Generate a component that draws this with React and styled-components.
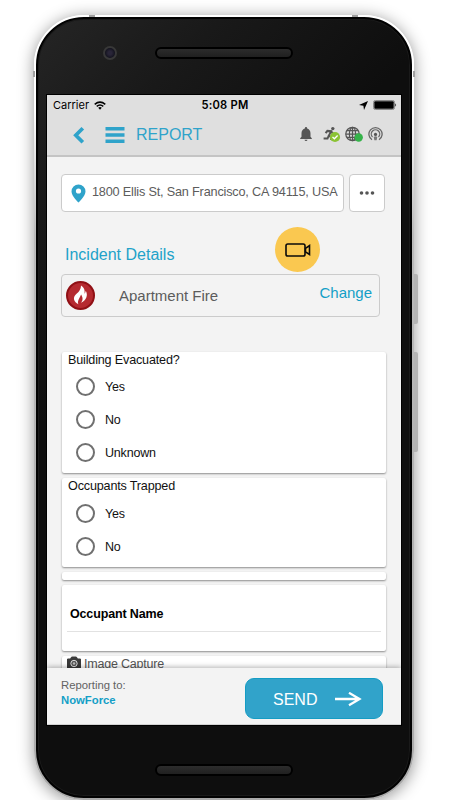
import React from "react";
import styled, { createGlobalStyle } from "styled-components";

const Global = createGlobalStyle`
  *, *::before, *::after { box-sizing: border-box; }
  html, body { margin: 0; background: #fff; overflow: hidden; }
  body { font-family: "Liberation Sans", Arial, sans-serif; }
`;

const Stage = styled.main`
  width: 450px;
  height: 800px;
  overflow: hidden;
  padding: 15px 0 0 34px;
  background: #fff;
`;

const Rim = styled.div`
  position: relative;
  width: 380px;
  height: 785px;
  padding: 2px;
  border-radius: 50px;
  background: linear-gradient(180deg, #fff 0%, #fff 12%, #bbb 28%, #aaa 100%);
  box-shadow: 0 2px 16px rgba(0, 0, 0, 0.42);
`;

const SideKey = styled.span`
  position: absolute;
  left: 380px;
  top: ${(p) => p.$top}px;
  width: 4px;
  height: ${(p) => p.$h}px;
  border-radius: 0 2px 2px 0;
  background: #b4b4b4;
`;

const Antenna = styled.span`
  position: absolute;
  left: ${(p) => p.$x}px;
  top: ${(p) => p.$y}px;
  width: ${(p) => p.$w}px;
  height: ${(p) => p.$h}px;
  background: #a0a0a0;
`;

const Body = styled.div`
  position: relative;
  width: 376px;
  height: 781px;
  border: 2px solid #020202;
  border-radius: 48px;
  padding: 0 9px;
  background: linear-gradient(135deg, #252525 0, #191919 130px, #0e0e0e 290px);
  box-shadow: inset 0 0 0 1px #1a1a1a;
`;

const TopBezel = styled.div`
  display: flex;
  align-items: center;
  height: 76px;
  padding: 0 0 9px 56px;
  gap: 38px;
`;

const Lens = styled.span`
  width: 14px;
  height: 14px;
  border: 2px solid #383838;
  border-radius: 50%;
  background: radial-gradient(circle, #292538 0 25%, #11111b 75%);
`;

const Grille = styled.span`
  width: 138px;
  height: 12px;
  border: 2px solid #000;
  border-radius: 6px;
  background: linear-gradient(#2c2c2c, #202020);
`;

const BottomBezel = styled.div`
  display: flex;
  justify-content: center;
  padding-top: 39px;
`;

const Screen = styled.section`
  display: flex;
  flex-direction: column;
  width: 354px;
  height: 630px;
  overflow: hidden;
  background: #f3f3f3;
  box-shadow: 0 0 0 1px #000;
`;

const Header = styled.header`
  flex: none;
  height: 62px;
  background: #dfdfdf;
  border-bottom: 2px solid #c4c4c4;
`;

const StatusBar = styled.div`
  display: grid;
  grid-template-columns: 1fr auto 1fr;
  align-items: center;
  height: 20px;
  padding: 0 4px 0 6px;
  color: #000;
  font: 500 11px Inter, sans-serif;
`;

const StatusGroup = styled.div`
  display: flex;
  align-items: center;
  justify-content: ${(p) => (p.$end ? "flex-end" : "flex-start")};
  gap: 5px;
  font-weight: 400;
`;

const Clock = styled.span`
  font-weight: 600;
  font-size: 11.2px;
  letter-spacing: 0.25px;
`;

const NavBar = styled.div`
  display: flex;
  align-items: center;
  height: 40px;
  padding: 0 18px 1px 25px;
  color: #2fa3ca;
`;

const NavTitle = styled.h1`
  margin: 1px 0 0 11px;
  font-size: 16px;
  font-weight: 400;
  flex: 1;
`;

const MenuIcon = styled.svg`
  margin-left: 20px;
`;

const NavIcons = styled.div`
  display: grid;
  grid-template-columns: 23px 22px 23px 15px;
  height: 20px;
`;

const Content = styled.div`
  flex: 1;
  min-height: 0;
  overflow: hidden;
  padding: 17px 14px 0;
`;

const AddressRow = styled.div`
  display: flex;
  gap: 5px;
  height: 38px;
`;

const Field = styled.div`
  display: flex;
  align-items: center;
  width: ${(p) => p.$w}px;
  border: 1px solid #cbcbcb;
  border-radius: 4px;
  background: #fff;
  color: #5c5c5c;
  font-size: 12.7px;
  padding-left: ${(p) => p.$pad}px;
  gap: 5px;
  white-space: nowrap;
`;

const Address = styled.span`
  padding: 0 0 2px 1px;
  letter-spacing: -0.19px;
`;

const HeadingRow = styled.div`
  display: flex;
  height: 62px;
  padding: 15px 0 0 4px;
  justify-content: space-between;
`;

const Heading = styled.h2`
  margin: 18px 0 0;
  color: #22a2c9;
  font-size: 16px;
  line-height: 20px;
  font-weight: 400;
`;

const VideoButton = styled.button`
  display: grid;
  place-items: center;
  width: 45px;
  height: 45px;
  margin-right: 67px;
  padding: 0;
  border: 0;
  border-radius: 50%;
  background: #fac850;
`;

const Incident = styled.div`
  display: flex;
  align-items: center;
  width: 319px;
  height: 43px;
  padding: 0 7px 1px 4px;
  border: 1px solid #cbcbcb;
  border-radius: 4px;
  color: #5c5c5c;
  font-size: 15px;
`;

const IncidentName = styled.span`
  flex: 1;
  padding-left: 24px;
`;

const Change = styled.a`
  color: #139fc7;
  padding-bottom: 6px;
  font-size: 15px;
`;

const Form = styled.div`
  display: grid;
  gap: 5px;
  margin: 35px 0 0 1px;
`;

const Card = styled.section`
  width: 324px;
  height: ${(p) => p.$h}px;
  border-radius: 2px;
  background: #fff;
  box-shadow: 0 1px 2px rgba(0, 0, 0, 0.42);
`;

const Question = styled.h3`
  margin: 0;
  padding-left: 6px;
  height: ${(p) => p.$h}px;
  color: #111;
  font-size: 12.6px;
  line-height: 17px;
  font-weight: 400;
  letter-spacing: -0.17px;
`;

const Option = styled.label`
  display: flex;
  align-items: center;
  gap: 10px;
  height: 33px;
  padding-left: 14px;
  color: #111;
  font-size: 12.5px;
  letter-spacing: -0.2px;
`;

const Radio = styled.span`
  width: 19px;
  height: 19px;
  border: 2px solid #707070;
  border-radius: 50%;
`;

const InputLabel = styled.div`
  height: 47px;
  margin: 0 5px;
  padding: 22px 0 0 3px;
  border-bottom: 1px solid #e2e2e2;
  color: #000;
  font-size: 12.5px;
  font-weight: 700;
  letter-spacing: -0.15px;
`;

const Capture = styled.div`
  display: flex;
  padding: 0 0 0 5px;
  gap: 3px;
  color: #555;
  font-size: 12.5px;
  line-height: 16px;
  letter-spacing: -0.2px;
`;

const Footer = styled.footer`
  position: relative;
  display: flex;
  flex: none;
  justify-content: space-between;
  height: 57px;
  padding: 10px 18px 0 14px;
  background: #f3f3f3;
  border-bottom: 1px solid #d2d2d2;
  box-shadow: 0 -1px 5px rgba(0, 0, 0, 0.3);
`;

const Recipient = styled.div`
  color: #626262;
  font-size: 11.3px;
  line-height: 15px;
`;

const RecipientName = styled.div`
  color: #139fc7;
  font-weight: 700;
  font-size: 11.3px;
`;

const SendButton = styled.button`
  display: flex;
  align-items: center;
  width: 138px;
  height: 41px;
  padding: 2px 20px 0 27px;
  justify-content: space-between;
  border: 1px solid #149cc4;
  border-radius: 9px;
  color: #fff;
  background: #31a3ca;
  font: 16px "Liberation Sans", Arial, sans-serif;
`;

const Wifi = () => (
  <svg width="12" height="9" viewBox="0 0 12 9" fill="none" stroke="#000" strokeWidth="1.5">
    <path d="M.7 3.3Q6-1.1 11.3 3.3" />
    <path d="M2.7 5.4Q6 2.6 9.3 5.4" />
    <path d="M4.2 6.7Q6 5.3 7.8 6.7L6 8.7Z" fill="#000" stroke="none" />
  </svg>
);

const Location = () => (
  <svg width="9" height="9" viewBox="0 0 9 9">
    <path d="M9 0L5 9 4.4 4.8 0 4.1Z" />
  </svg>
);

const Battery = () => (
  <svg width="24" height="10" viewBox="0 0 24 10">
    <rect x=".5" y=".5" width="21" height="9" rx="1.8" fill="none" stroke="#8a8a8a" />
    <rect x="1.3" y="1.3" width="19.4" height="7.4" rx=".9" />
    <path d="M22.3 3.2Q24 5 22.3 6.8Z" />
  </svg>
);

const Bell = () => (
  <svg width="12" height="18" viewBox="0 0 12 18" fill="#555">
    <path d="M6 2.1Q7.2 2.1 7.2 3.5C9.6 4.2 10.5 6.2 10.5 8.5V11.7L11.8 13.2V14.1H.2V13.2L1.5 11.7V8.5C1.5 6.2 2.4 4.2 4.8 3.5Q4.8 2.1 6 2.1ZM4.5 14.7H7.5Q7.3 16 6 16T4.5 14.7Z" />
  </svg>
);

const Runner = () => (
  <svg width="18" height="18" viewBox="0 0 18 18">
    <circle cx="9.8" cy="3.6" r="1.7" fill="#555" />
    <path d="M2.6 8.2L4.4 5.9 8 6.2 6 10.6 8.6 12.5 8 15M6 10.2L4.5 13.6 .6 13.6M8.2 6.5L10.4 9.1" stroke="#555" strokeWidth="2" fill="none" />
    <circle cx="12" cy="12" r="5.1" fill="#8bc334" />
    <path d="M9.5 12L11.4 13.8 14.6 10.5" stroke="#fff" strokeWidth="1.3" fill="none" />
  </svg>
);

const Globe = () => (
  <svg width="18" height="18" viewBox="0 0 18 18" fill="none" stroke="#555" strokeWidth="1.25">
    <circle cx="7.5" cy="9" r="6.7" />
    <ellipse cx="7.5" cy="9" rx="3.1" ry="6.7" />
    <path d="M7.5 2.3V15.7M.8 9H14.2M2 5.7H13M2 12.3H13" />
    <circle cx="13.7" cy="12.5" r="4.2" fill="#35b34a" stroke="none" />
  </svg>
);

const Broadcast = () => (
  <svg width="15" height="18" viewBox="0 0 15 18" fill="none" stroke="#666" strokeWidth="1.3">
    <path d="M4 14.8A6.6 6.6 0 1 1 11 14.8" />
    <path d="M4.5 12A4.2 4.2 0 1 1 10.5 12" />
    <circle cx="7.5" cy="9.4" r="1.6" fill="#555" stroke="none" />
    <path d="M5.7 12.1Q7.5 10.6 9.3 12.1L8.6 15.3H6.4Z" fill="#777" stroke="none" />
  </svg>
);

const Flame = () => (
  <svg width="29" height="29" viewBox="0 0 29 29">
    <circle cx="14.5" cy="14.5" r="13.5" fill="#b52a30" stroke="#901015" strokeWidth="2" />
    <path d="M15 4.4C20 8 18.1 11 18.8 12.7L19.8 9.8C22.2 14.2 20.5 19.3 15 21.8 17.8 18.6 16.2 15.4 15.1 13.5 14.2 16.4 10.8 19.7 12.4 23.3 7.8 20.8 6.5 16.9 9.8 13.5 11.8 11.4 14.8 9.5 15 4.4Z" fill="#fff" />
  </svg>
);

const Camera = () => (
  <svg width="14" height="14" viewBox="0 0 14 14">
    <path d="M.5 3H3.5L4.6 1H9.4L10.5 3H13.5V13H.5Z" fill="#3a3a3a" stroke="#3a3a3a" strokeLinejoin="round" />
    <circle cx="7" cy="7.5" r="3.2" fill="#555" stroke="#ddd" />
    <circle cx="7" cy="7.5" r="1.2" fill="#bbb" />
  </svg>
);

const Choices = ({ title, options, height, titleHeight }) => (
  <Card $h={height}>
    <Question $h={titleHeight}>{title}</Question>
    {options.map((label) => (
      <Option key={label}><Radio />{label}</Option>
    ))}
  </Card>
);

export default function App() {
  return (
    <Stage>
      <Global />
      <Rim>
        <Antenna $x={55} $y={0} $w={6} $h={2} />
        <Antenna $x={318} $y={0} $w={6} $h={2} />
        <Antenna $x={-1} $y={56} $w={2} $h={6} />
        <Antenna $x={379} $y={56} $w={2} $h={6} />
        <SideKey $top={259} $h={50} />
        <SideKey $top={337} $h={100} />
        <Body>
          <TopBezel><Lens /><Grille /></TopBezel>
          <Screen>
            <Header>
              <StatusBar>
                <StatusGroup>Carrier <Wifi /></StatusGroup>
                <Clock>5:08 PM</Clock>
                <StatusGroup $end><Location /><Battery /></StatusGroup>
              </StatusBar>
              <NavBar>
                <svg width="13" height="18" viewBox="0 0 13 18" fill="none" stroke="#2fa3ca" strokeWidth="3.7"><path d="M10.8 2.2L3.8 9.2 10.8 16.2" /></svg>
                <MenuIcon width="20" height="16" viewBox="0 0 20 16" fill="#2fa3ca"><path d="M.5 0H19.5V3.5H.5ZM.5 6.3H19.5V9.7H.5ZM.5 12.5H19.5V16H.5Z" /></MenuIcon>
                <NavTitle>REPORT</NavTitle>
                <NavIcons><Bell /><Runner /><Globe /><Broadcast /></NavIcons>
              </NavBar>
            </Header>
            <Content>
              <AddressRow>
                <Field $w={283} $pad={9}>
                  <svg width="15" height="19" viewBox="0 0 15 19"><path d="M7.5.5A7 7 0 0 0 .5 7.5C.5 12.2 7.5 18.5 7.5 18.5S14.5 12.2 14.5 7.5A7 7 0 0 0 7.5.5Z" fill="#2fa3ca" /><circle cx="7.5" cy="7" r="2.6" fill="#fff" /></svg>
                  <Address>1800 Ellis St, San Francisco, CA 94115, USA</Address>
                </Field>
                <Field $w={36} $pad={9}><svg width="16" height="4" viewBox="0 0 16 4" fill="#555"><circle cx="2.5" cy="2" r="1.8" /><circle cx="8" cy="2" r="1.8" /><circle cx="13.5" cy="2" r="1.8" /></svg></Field>
              </AddressRow>
              <HeadingRow>
                <Heading>Incident Details</Heading>
                <VideoButton aria-label="Record video">
                  <svg width="26" height="14" viewBox="0 0 26 14" fill="none" stroke="#0a0a0a" strokeWidth="1.6"><rect x="1" y="1" width="19" height="12" rx="1.8" /><path d="M20.5 5.4L24.5 2.5V11.5L20.5 8.8Z" /></svg>
                </VideoButton>
              </HeadingRow>
              <Incident><Flame /><IncidentName>Apartment Fire</IncidentName><Change>Change</Change></Incident>
              <Form>
                <Choices title="Building Evacuated?" options={["Yes", "No", "Unknown"]} height={121} titleHeight={18} />
                <Choices title="Occupants Trapped" options={["Yes", "No"]} height={89} titleHeight={19} />
                <Card $h={8} />
                <Card $h={66}><InputLabel>Occupant Name</InputLabel></Card>
                <Card $h={40}><Capture><Camera />Image Capture</Capture></Card>
              </Form>
            </Content>
            <Footer>
              <Recipient>Reporting to:<RecipientName>NowForce</RecipientName></Recipient>
              <SendButton>SEND <svg width="27" height="15" viewBox="0 0 27 15" fill="none" stroke="#fff" strokeWidth="2.3"><path d="M0 7H25M14 .8L24.5 7 14 13.2" /></svg></SendButton>
            </Footer>
          </Screen>
          <BottomBezel><Grille /></BottomBezel>
        </Body>
      </Rim>
    </Stage>
  );
}
